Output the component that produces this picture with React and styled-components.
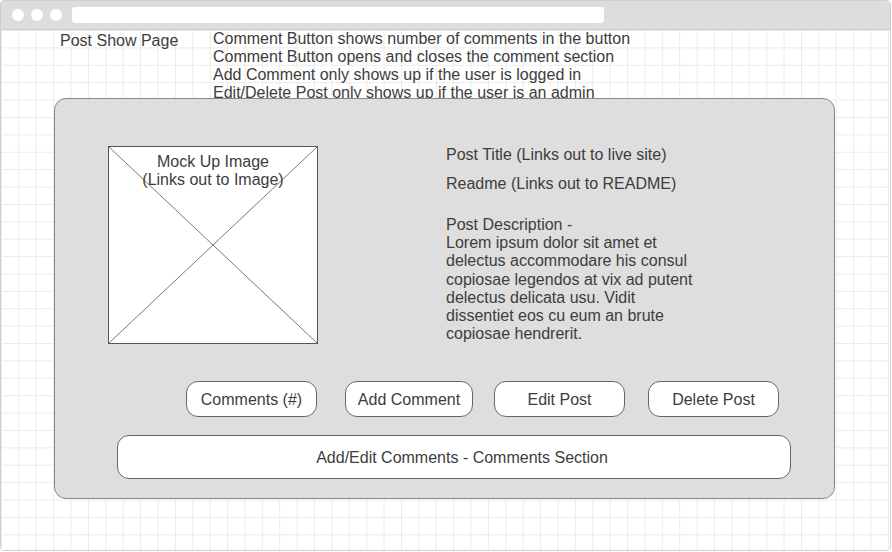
import React from "react";
import styled, { createGlobalStyle } from "styled-components";

const GlobalStyle = createGlobalStyle`
  html, body {
    margin: 0;
    padding: 0;
    background: #ffffff;
  }
  body {
    font-family: "Liberation Sans", Arial, sans-serif;
    color: #3d3d3d;
  }
`;

const notes = [
  "Comment Button shows number of comments in the button",
  "Comment Button opens and closes the comment section",
  "Add Comment only shows up if the user is logged in",
  "Edit/Delete Post only shows up if the user is an admin",
];

const description = [
  "Post Description -",
  "Lorem ipsum dolor sit amet et",
  "delectus accommodare his consul",
  "copiosae legendos at vix ad putent",
  "delectus delicata usu. Vidit",
  "dissentiet eos cu eum an brute",
  "copiosae hendrerit.",
];

// label, width, space before
const buttons = [
  ["Comments (#)", 131, 0],
  ["Add Comment", 128, 28],
  ["Edit Post", 131, 21],
  ["Delete Post", 131, 23],
];

function App() {
  return (
    <>
      <GlobalStyle />
      <Frame>
        <TitleBar>
          <Dot />
          <Dot />
          <Dot />
          <UrlBar />
        </TitleBar>
        <Canvas>
          <Header>
            <PageName>Post Show Page</PageName>
            <Notes>
              {notes.map((n) => (
                <div key={n}>{n}</div>
              ))}
            </Notes>
          </Header>
          <Card>
            <TopRow>
              <ImageBox>
                <svg width="100%" height="100%" viewBox="0 0 209 197" preserveAspectRatio="none">
                  <line x1="0" y1="0" x2="209" y2="197" stroke="#555" strokeWidth="0.8" />
                  <line x1="209" y1="0" x2="0" y2="197" stroke="#555" strokeWidth="0.8" />
                </svg>
                <ImageLabel>
                  Mock Up Image
                  <br />
                  (Links out to Image)
                </ImageLabel>
              </ImageBox>
              <Info>
                <InfoLine>Post Title (Links out to live site)</InfoLine>
                <InfoLine $top={11}>Readme (Links out to README)</InfoLine>
                <Description>
                  {description.map((l) => (
                    <div key={l}>{l}</div>
                  ))}
                </Description>
              </Info>
            </TopRow>
            <ButtonRow>
              {buttons.map(([label, w, space]) => (
                <PillButton key={label} $w={w} $space={space}>
                  {label}
                </PillButton>
              ))}
            </ButtonRow>
            <CommentsSection>Add/Edit Comments - Comments Section</CommentsSection>
          </Card>
        </Canvas>
      </Frame>
    </>
  );
}

export default App;

const Frame = styled.div`
  box-sizing: border-box;
  width: 891px;
  height: 551px;
  border: 1px solid #cfcfcf;
  border-radius: 4px;
  overflow: hidden;
  display: flex;
  flex-direction: column;
`;

const TitleBar = styled.div`
  height: 28px;
  flex-shrink: 0;
  background: #dddddd;
  border-bottom: 1px solid #cccccc;
  display: flex;
  align-items: center;
  padding-left: 11px;
  gap: 7px;
`;

const Dot = styled.div`
  width: 12px;
  height: 12px;
  border-radius: 50%;
  background: #ffffff;
`;

const UrlBar = styled.div`
  width: 532px;
  height: 16px;
  margin-left: 3px;
  border-radius: 3px;
  background: #ffffff;
`;

const Canvas = styled.div`
  flex: 1;
  background-color: #ffffff;
  background-image: linear-gradient(to right, #ebebeb 1px, transparent 1px),
    linear-gradient(to bottom, #ebebeb 1px, transparent 1px);
  background-size: 17.4px 17.4px;
  background-position: 0 0;
  display: flex;
  flex-direction: column;
`;

const Header = styled.div`
  height: 68px;
  display: flex;
  padding-left: 59px;
  font-size: 16px;
  line-height: 18px;
`;

const PageName = styled.div`
  width: 153px;
  padding-top: 2px;
`;

const Notes = styled.div`
  white-space: nowrap;
`;

const Card = styled.div`
  position: relative;
  box-sizing: border-box;
  width: 781px;
  height: 401px;
  margin-left: 53px;
  padding: 47px 43px 19px 0;
  background: #dedede;
  border: 1px solid #888888;
  border-radius: 12px;
  display: flex;
  flex-direction: column;
`;

const TopRow = styled.div`
  display: flex;
  padding-left: 53px;
  gap: 128px;
`;

const ImageBox = styled.div`
  position: relative;
  box-sizing: border-box;
  width: 210px;
  height: 198px;
  background: #ffffff;
  border: 1px solid #555555;
  svg {
    display: block;
  }
`;

const ImageLabel = styled.div`
  position: absolute;
  top: 6px;
  left: 0;
  right: 0;
  text-align: center;
  font-size: 16px;
  line-height: 18px;
`;

const Info = styled.div`
  font-size: 16px;
  line-height: 18px;
`;

const InfoLine = styled.div`
  margin-top: ${(p) => p.$top || 0}px;
`;

const Description = styled.div`
  margin-top: 23px;
  line-height: 18.2px;
`;

const ButtonRow = styled.div`
  display: flex;
  margin-top: 37px;
  padding-left: 131px;
`;

const PillButton = styled.div`
  box-sizing: border-box;
  width: ${(p) => p.$w}px;
  height: 36px;
  margin-left: ${(p) => p.$space}px;
  padding-top: 2px;
  background: #ffffff;
  border: 1px solid #666666;
  border-radius: 12px;
  display: flex;
  align-items: center;
  justify-content: center;
  font-size: 16px;
`;

const CommentsSection = styled.div`
  box-sizing: border-box;
  height: 45px;
  margin: 18px 0 0 62px;
  padding: 2px 0 0 16px;
  background: #ffffff;
  border: 1px solid #666666;
  border-radius: 12px;
  display: flex;
  align-items: center;
  justify-content: center;
  font-size: 16px;
`;
